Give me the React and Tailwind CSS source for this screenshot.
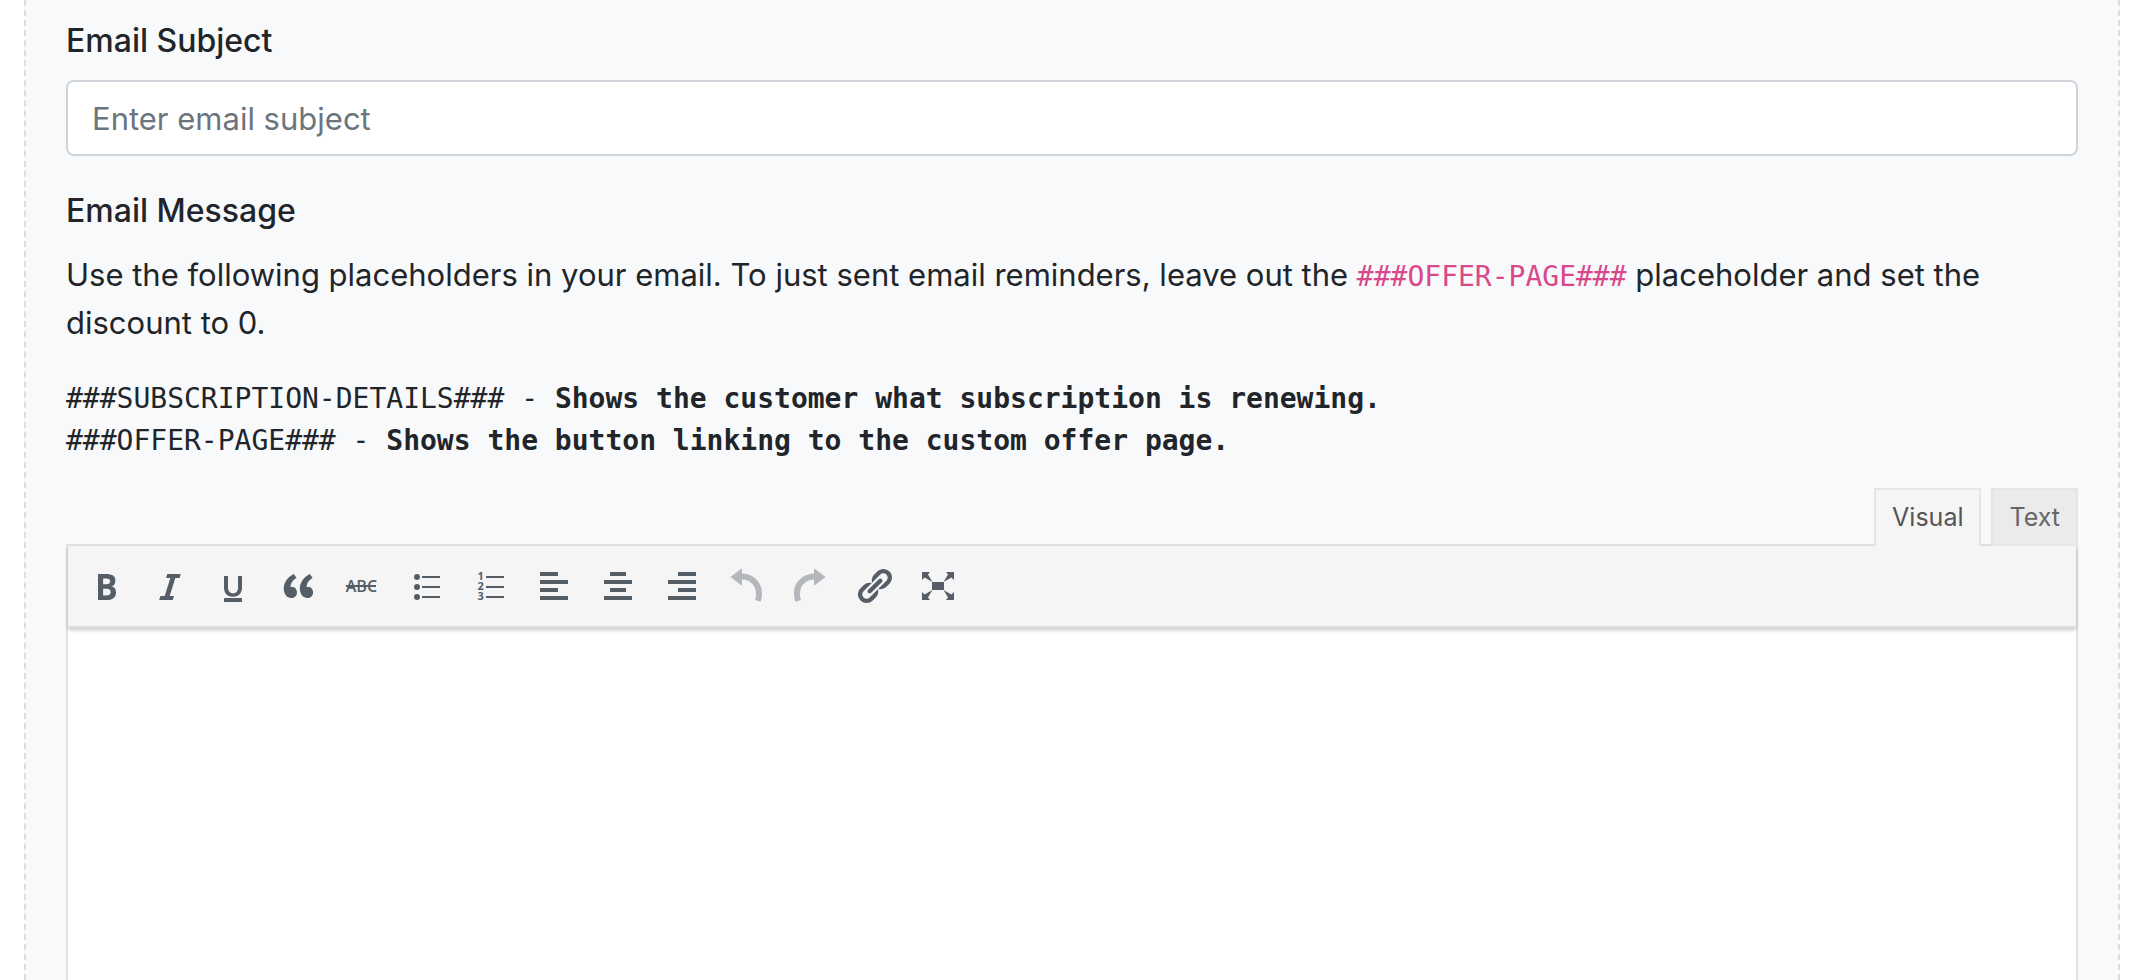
import React from "react";

function Icon({ children }) {
  return (
    <svg viewBox="0 0 20 20" className="size-10" fill="currentColor" aria-hidden="true">
      {children}
    </svg>
  );
}

const undoPath =
  "M2.2 5.5 8 1.1V3.8C13.8 4 18 8.3 18 13.6 18 15.2 17.8 16.5 17.3 17.9L14.5 17C14.9 16 15.1 15 15 13.6 14.9 9.6 12 6.9 8 6.8V9.9z";

const tools = [
  {
    label: "Bold",
    icon: (
      <path d="M6 4v13h4.54c1.37 0 2.46-.33 3.26-1 .8-.66 1.2-1.58 1.2-2.77 0-.84-.17-1.51-.51-2.01s-.9-.85-1.67-1.03v-.09c.57-.1 1.02-.4 1.36-.9s.51-1.13.51-1.91c0-1.14-.39-1.98-1.17-2.5C12.75 4.26 11.5 4 9.78 4H6zm2.57 5.15V6.26h1.36c.73 0 1.27.11 1.61.32.34.22.51.58.51 1.07 0 .54-.16.92-.47 1.15s-.82.35-1.51.35h-1.5zm0 2.19h1.6c1.44 0 2.16.53 2.16 1.61 0 .6-.17 1.05-.51 1.34s-.86.43-1.57.43H8.57v-3.38z" />
    ),
  },
  {
    label: "Italic",
    icon: <path d="M14.78 6h-2.13l-2.8 9h2.12l-.62 2H4.6l.62-2h2.14l2.8-9H8.03l.62-2h6.75z" />,
  },
  {
    label: "Underline",
    icon: (
      <path d="M14 5h-2v5.71c0 1.99-1.12 2.98-2.45 2.98-1.32 0-2.55-1-2.55-2.96V5H5v5.87c0 1.91 1 4.54 4.48 4.54 3.49 0 4.52-2.58 4.52-4.5V5zm0 13v-2H5v2h9z" />
    ),
  },
  {
    label: "Blockquote",
    icon: (
      <path d="M9.49 13.22c0-.74-.2-1.38-.61-1.9-.62-.78-1.83-.88-2.53-.72-.29-1.65 1.11-3.75 2.92-4.65L7.88 4c-2.73 1.3-5.42 4.28-4.96 8.05C3.21 14.43 4.59 16 6.54 16c.85 0 1.56-.25 2.12-.75s.83-1.18.83-2.03zm8.05 0c0-.74-.2-1.38-.61-1.9-.63-.78-1.83-.88-2.53-.72-.29-1.65 1.11-3.75 2.92-4.65L15.93 4c-2.73 1.3-5.41 4.28-4.95 8.05.29 2.38 1.66 3.95 3.61 3.95.85 0 1.56-.25 2.12-.75s.83-1.18.83-2.03z" />
    ),
  },
  {
    label: "Strikethrough",
    icon: (
      <>
        <text
          x="9.7"
          y="13"
          textAnchor="middle"
          fontSize="8"
          className="font-['Open_Sans',sans-serif] font-semibold"
        >
          ABC
        </text>
        <path d="M2 9.5h15v1H2z" />
      </>
    ),
  },
  {
    label: "Bulleted list",
    icon: (
      <>
        <circle cx="5.5" cy="5.5" r="1.5" />
        <circle cx="5.5" cy="10.5" r="1.5" />
        <circle cx="5.5" cy="15.5" r="1.5" />
        <path d="M8 5h9v1H8zM8 10h9v1H8zM8 15h9v1H8z" />
      </>
    ),
  },
  {
    label: "Numbered list",
    icon: (
      <>
        <g fontSize="5.5" textAnchor="middle" className="font-['Open_Sans',sans-serif] font-bold">
          <text x="5.3" y="7">1</text>
          <text x="5.3" y="12">2</text>
          <text x="5.3" y="17">3</text>
        </g>
        <path d="M8 5h9v1H8zM8 10h9v1H8zM8 15h9v1H8z" />
      </>
    ),
  },
  { label: "Align left", icon: <path d="M3 3h9v2H3zM3 7h14v2H3zM3 11h9v2H3zM3 15h14v2H3z" /> },
  { label: "Align center", icon: <path d="M6 3h8v2H6zM3 7h14v2H3zM6 11h8v2H6zM3 15h14v2H3z" /> },
  { label: "Align right", icon: <path d="M8 3h9v2H8zM3 7h14v2H3zM8 11h9v2H8zM3 15h14v2H3z" /> },
  { label: "Undo", disabled: true, icon: <path d={undoPath} /> },
  { label: "Redo", disabled: true, icon: <path d={undoPath} transform="matrix(-1 0 0 1 20 0)" /> },
  {
    label: "Insert link",
    icon: (
      <path d="M17.74 2.76c1.68 1.69 1.68 4.41 0 6.1l-1.53 1.52c-1.12 1.12-2.7 1.47-4.14 1.09l2.62-2.61.76-.77.76-.76c.84-.84.84-2.2 0-3.04-.84-.85-2.2-.85-3.04 0l-.77.76-3.38 3.38c-.37-1.44-.02-3.02 1.1-4.14l1.52-1.53c1.69-1.68 4.42-1.68 6.1 0zM8.59 13.43l5.34-5.34c.42-.42.42-1.1 0-1.52-.44-.43-1.13-.39-1.53 0l-5.33 5.34c-.42.42-.42 1.1 0 1.52.44.43 1.13.39 1.52 0zm-.76 2.29l4.14-4.15c.38 1.44.03 3.02-1.09 4.14l-1.52 1.53c-1.69 1.68-4.41 1.68-6.1 0-1.68-1.68-1.68-4.42 0-6.1l1.53-1.52c1.12-1.12 2.7-1.47 4.14-1.1l-4.14 4.15c-.85.84-.85 2.2 0 3.05.84.84 2.2.84 3.04 0z" />
    ),
  },
  {
    label: "Fullscreen",
    icon: (
      <>
        <path d="M7 8h6v4H7z" />
        <path d="M2 3h4L5 4.2 7.2 8 3.3 5.8 2 7z" />
        <path d="M18 3h-4l1 1.2L12.8 8l3.9-2.2L18 7z" />
        <path d="M2 17h4l-1-1.2L7.2 12l-3.9 2.2L2 13z" />
        <path d="M18 17h-4l1-1.2-2.2-3.8 3.9 2.2L18 13z" />
      </>
    ),
  },
];

function Toolbar() {
  return (
    <div
      role="toolbar"
      aria-label="Formatting"
      className="relative flex flex-wrap items-center gap-6 border-b-2 border-[#dddddd] bg-[#f5f5f5] px-[18px] py-5 shadow-[0_2px_4px_rgba(0,0,0,0.22)]"
    >
      {tools.map(({ label, disabled, icon }) => (
        <button
          key={label}
          type="button"
          aria-label={label}
          disabled={disabled}
          className="text-[#555d66] disabled:opacity-40"
        >
          <Icon>{icon}</Icon>
        </button>
      ))}
    </div>
  );
}

export default function App() {
  return (
    <div className="flex min-h-screen flex-col bg-white pr-[22px] pl-6 font-[Inter,sans-serif] text-[31px] leading-[48px] text-[#212529]">
      <form className="flex grow flex-col border-x-2 border-dashed border-[#dddddd] bg-[#f8f9fb] px-10 pt-[17px]">
        <label htmlFor="subject" className="text-[32px] leading-[48px] font-medium">
          Email Subject
        </label>
        <input
          id="subject"
          type="text"
          placeholder="Enter email subject"
          className="mt-[15px] h-[76px] w-full rounded-lg border-2 border-[#ced4da] bg-white px-6 placeholder:text-[#6c757d]"
        />
        <label htmlFor="message" className="mt-[31px] text-[32px] leading-[48px] font-medium">
          Email Message
        </label>
        <p className="mt-4">
          Use the following placeholders in your email. To just sent email reminders, leave out the{" "}
          <code className="font-['DejaVu_Sans_Mono',monospace] text-[28px] leading-none text-[#d9488b]">
            ###OFFER-PAGE###
          </code>{" "}
          placeholder and set the discount to 0.
        </p>
        <pre className="mt-[31px] font-['DejaVu_Sans_Mono',monospace] text-[28px] leading-[42px] whitespace-pre-wrap">
          ###SUBSCRIPTION-DETAILS### - <b>Shows the customer what subscription is renewing.</b>
          {"\n"}###OFFER-PAGE### - <b>Shows the button linking to the custom offer page.</b>
        </pre>
        <div className="relative z-10 mt-[26px] -mb-0.5 flex justify-end gap-2.5 text-[25px] leading-[54px]">
          <button
            type="button"
            className="border-2 border-b-0 border-[#e5e5e5] bg-[#f5f5f5] px-4 pb-0.5 text-[#555555]"
          >
            Visual
          </button>
          <button type="button" className="border-2 border-[#e5e5e5] bg-[#ebebeb] px-4 text-[#666666]">
            Text
          </button>
        </div>
        <div className="flex grow flex-col border-2 border-b-0 border-[#e2e2e2] bg-white">
          <Toolbar />
          <textarea id="message" className="w-full grow resize-none bg-white p-5 outline-none" />
        </div>
      </form>
    </div>
  );
}
